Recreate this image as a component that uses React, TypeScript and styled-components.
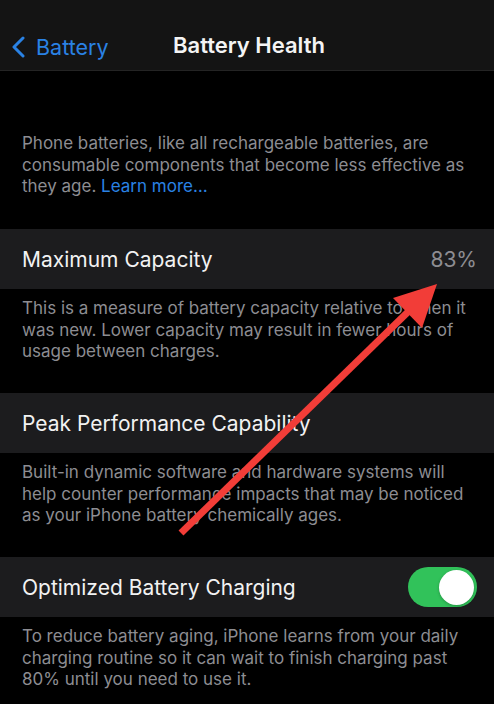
import React from 'react';
import styled, { createGlobalStyle } from 'styled-components';

const GlobalStyle = createGlobalStyle`
  html, body {
    margin: 0;
    padding: 0;
    background: #000;
  }
  body {
    font-family: Inter, "Noto Sans", sans-serif;
    -webkit-font-smoothing: antialiased;
  }
`;

export default function App() {
  return (
    <>
      <GlobalStyle />
      <Screen>
        <NavBar>
          <BackButton>
            <svg width="15" height="22" viewBox="0 0 15 22">
              <path d="M12 2 L3 11 L12 20" fill="none" stroke="#2a82e4" strokeWidth="3" strokeLinecap="round" strokeLinejoin="round" />
            </svg>
            <span>Battery</span>
          </BackButton>
          <NavTitle>Battery Health</NavTitle>
        </NavBar>

        <Footer $top={62}>
          Phone batteries, like all rechargeable batteries, are consumable components that become less effective as they age. <LinkText>Learn more…</LinkText>
        </Footer>

        <Row>
          <Label>Maximum Capacity</Label>
          <Value>83%</Value>
        </Row>
        <Footer>
          This is a measure of battery capacity relative to when it was new. Lower capacity may result in fewer hours of usage between charges.
        </Footer>

        <Row>
          <Label>Peak Performance Capability</Label>
        </Row>
        <Footer>
          Built-in dynamic software and hardware systems will help counter performance impacts that may be noticed as your iPhone battery chemically ages.
        </Footer>

        <Row>
          <Label>Optimized Battery Charging</Label>
          <Toggle>
            <Knob />
          </Toggle>
        </Row>
        <Footer>
          To reduce battery aging, iPhone learns from your daily charging routine so it can wait to finish charging past 80% until you need to use it.
        </Footer>

        <ArrowLayer viewBox="0 0 494 704">
          <line x1="181" y1="533" x2="412" y2="308" stroke="#f23d38" strokeWidth="7" />
          <polygon points="437,284 393,298 422,328" fill="#f23d38" />
        </ArrowLayer>
      </Screen>
    </>
  );
}

const Screen = styled.div`
  position: relative;
  width: 494px;
  height: 704px;
  overflow: hidden;
  background: #000;
`;

const NavBar = styled.div`
  position: relative;
  height: 71px;
  background: #141414;
  border-bottom: 1px solid #242424;
  display: flex;
  align-items: center;
  justify-content: center;
  padding-top: 2px;
  box-sizing: border-box;
`;

const BackButton = styled.div`
  position: absolute;
  left: 11px;
  top: 35px;
  display: flex;
  align-items: center;
  gap: 10px;
  color: #2a82e4;
  font-size: 21.5px;
  span {
    line-height: 24px;
  }
`;

const NavTitle = styled.div`
  color: #f4f4f4;
  font-size: 22px;
  font-weight: 600;
  margin-left: 4px;
  margin-top: 18px;
`;

const Footer = styled.div<{ $top?: number }>`
  padding: ${(p) => p.$top ?? 9}px 22px 30px 22px;
  min-height: 104px;
  box-sizing: border-box;
  color: #8d8d92;
  font-size: 17px;
  line-height: 21.5px;
  ${(p) => (p.$top ? `min-height: 158px;` : '')}
`;

const LinkText = styled.span`
  color: #2a82e4;
`;

const Row = styled.div`
  height: 60px;
  background: #1c1c1e;
  display: flex;
  align-items: center;
  justify-content: space-between;
  padding: 0 17px 0 22px;
  box-sizing: border-box;
`;

const Label = styled.div`
  color: #f2f2f2;
  font-size: 21px;
`;

const Value = styled.div`
  color: #8d8d92;
  font-size: 21px;
`;

const Toggle = styled.div`
  width: 69px;
  height: 40px;
  border-radius: 20px;
  background: #31c25a;
  display: flex;
  align-items: center;
  justify-content: flex-end;
  padding: 0 3px;
  box-sizing: border-box;
`;

const Knob = styled.div`
  width: 35px;
  height: 35px;
  border-radius: 50%;
  background: #fff;
  box-shadow: 0 1px 3px rgba(0, 0, 0, 0.25);
`;

const ArrowLayer = styled.svg`
  position: absolute;
  left: 0;
  top: 0;
  width: 494px;
  height: 704px;
  pointer-events: none;
`;
